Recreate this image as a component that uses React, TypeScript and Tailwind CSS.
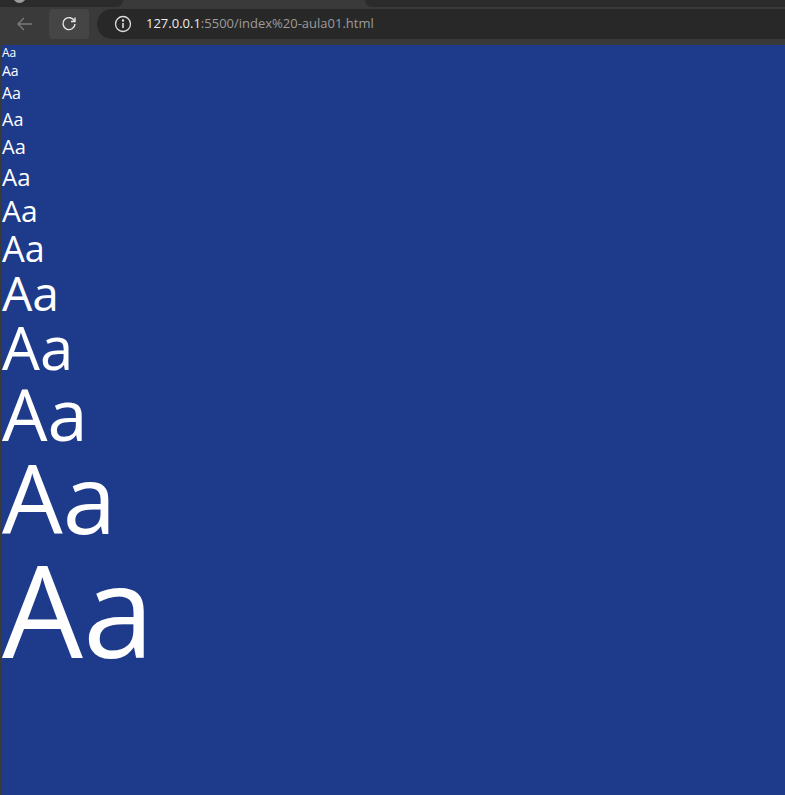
import React from 'react';

const sizes = [
  'text-xs',
  'text-sm',
  'text-base',
  'text-lg',
  'text-xl',
  'text-2xl',
  'text-3xl',
  'text-4xl',
  'text-5xl',
  'text-6xl',
  'text-7xl',
  'text-8xl',
  'text-9xl',
];

const BrowserBar: React.FC = () => (
  <div className="flex flex-col bg-[#3a3a3a] h-[45px] shrink-0">
    {/* tab strip, cropped */}
    <div className="flex h-[7px]">
      <div className="relative w-[123px] bg-[#2b2b2b] rounded-br-[8px] overflow-hidden">
        <div className="absolute left-[13px] top-[-10px] w-[13px] h-[13px] rounded-full bg-[#9a9a9a]" />
      </div>
      <div className="w-[242px]" />
      <div className="flex-1 bg-[#2b2b2b] rounded-bl-[8px]" />
    </div>
    <div className="flex items-center h-[34px] pt-[4px] pb-[4px]">
      <div className="w-[49px] flex items-center justify-center">
        <svg width="18" height="18" viewBox="0 0 18 18" fill="none" stroke="#7b7b7b" strokeWidth="1.3">
          <path d="M16 9H2M8 3L2 9l6 6" />
        </svg>
      </div>
      <div className="w-[40px] h-[30px] rounded-[4px] bg-[#454545] flex items-center justify-center">
        <svg width="18" height="18" viewBox="0 0 18 18" fill="none" stroke="#e6e6e6" strokeWidth="1.4">
          <path d="M14.5 6.2A6 6 0 1 0 15 9" />
          <path d="M15 2.5v4h-4" />
        </svg>
      </div>
      <div className="flex-1 ml-[8px] -mr-[20px] h-[30px] rounded-full bg-[#282828] flex items-center pl-[17px]">
        <svg width="18" height="18" viewBox="0 0 18 18" fill="none" stroke="#dedede" strokeWidth="1.3">
          <circle cx="9" cy="9" r="7.5" />
          <path d="M9 8v5" strokeWidth="1.6" />
          <circle cx="9" cy="5.4" r="0.6" fill="#dedede" />
        </svg>
        <span className="ml-[14px] text-[13px] font-['Open_Sans',sans-serif]">
          <span className="text-[#ececec]">127.0.0.1</span>
          <span className="text-[#9c9c9c]">:5500/index%20-aula01.html</span>
        </span>
      </div>
    </div>
  </div>
);

export default function App() {
  return (
    <div className="w-[785px] h-[795px] flex flex-col overflow-hidden bg-[#3a3a3a]">
      <BrowserBar />
      <div className="flex flex-1 min-h-0">
        <div className="w-[2px] bg-[#3a3a3a]" />
        <main className="flex-1 bg-[#1e3a8a] text-white font-['Open_Sans',sans-serif]">
          {sizes.map((s) => (
            <p key={s} className={s}>
              Aa
            </p>
          ))}
        </main>
      </div>
    </div>
  );
}
